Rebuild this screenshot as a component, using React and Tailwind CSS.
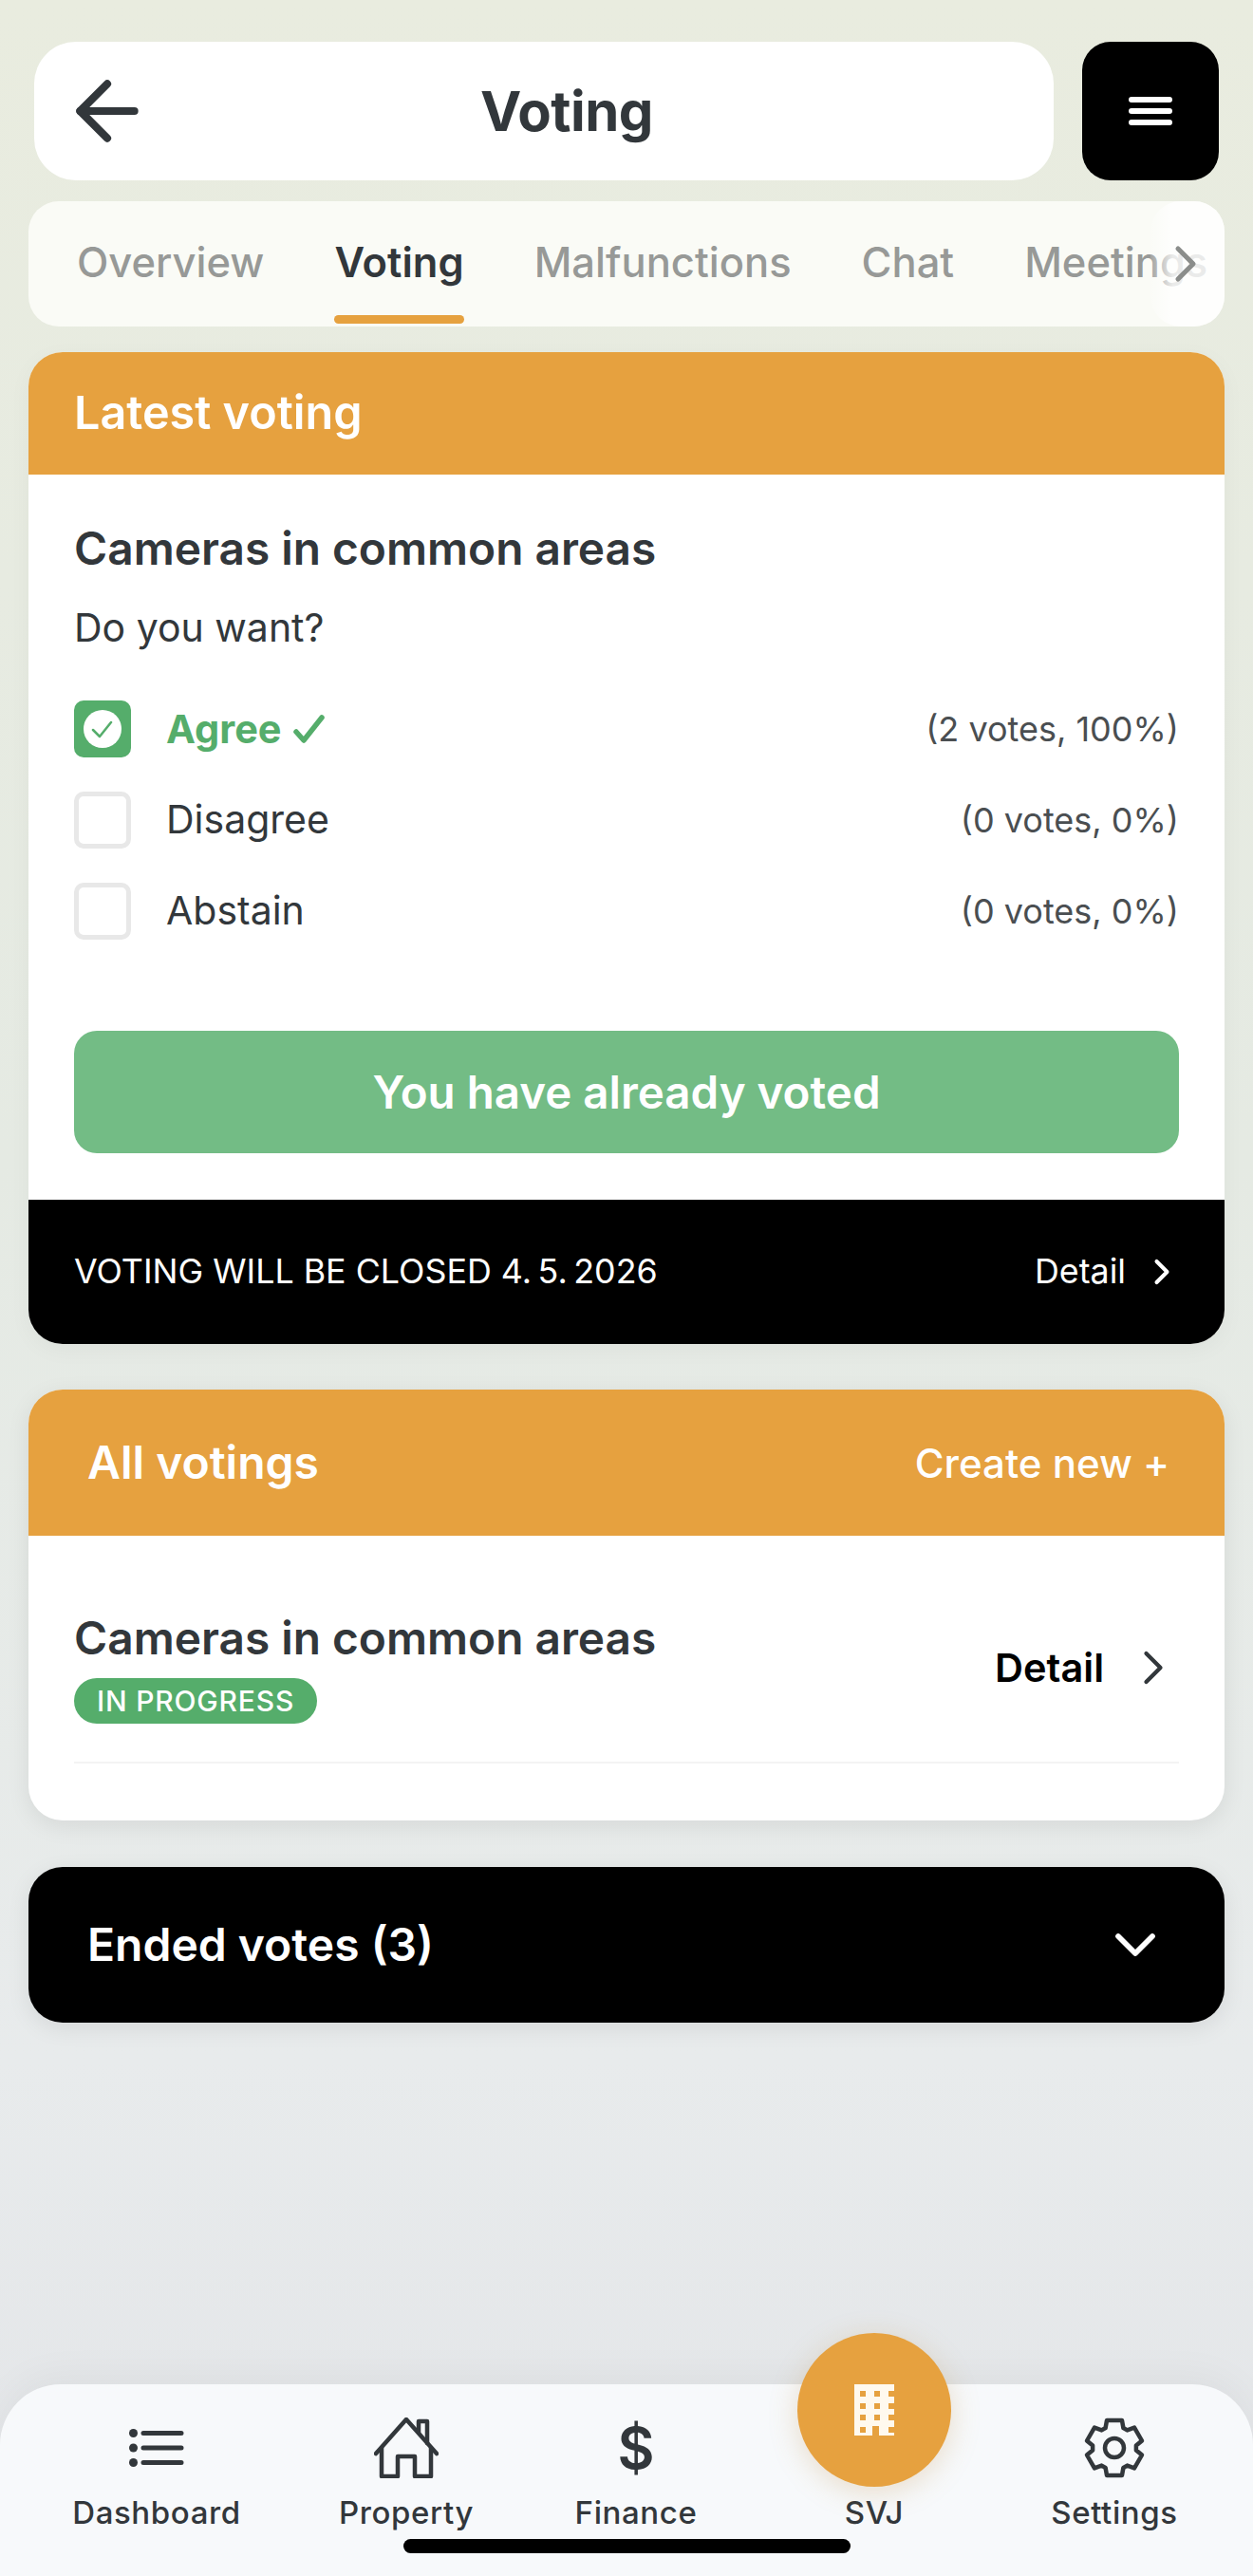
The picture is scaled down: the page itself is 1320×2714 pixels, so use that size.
import { ArrowLeft, ChevronDown, ChevronRight } from 'lucide-react';

const tabs = ['Overview', 'Voting', 'Malfunctions', 'Chat', 'Meetings'];

const options = [
  { label: 'Agree', result: '(2 votes, 100%)', checked: true },
  { label: 'Disagree', result: '(0 votes, 0%)' },
  { label: 'Abstain', result: '(0 votes, 0%)' },
];

// six rounded teeth round a centre point
function gearPath() {
  const pts = [];
  for (let i = 0; i < 6; i++) {
    const a = (i * Math.PI) / 3 - Math.PI / 2;
    [[-0.42, 23], [-0.27, 30], [0.27, 30], [0.42, 23]].forEach(([d, r]) => {
      pts.push(`${(32 + r * Math.cos(a + d)).toFixed(1)} ${(32 + r * Math.sin(a + d)).toFixed(1)}`);
    });
  }
  return 'M' + pts.join('L') + 'Z';
}

function ListIcon() {
  return (
    <svg width="58" height="40" viewBox="0 0 58 40" fill="none" stroke="#32373b" strokeWidth="5" strokeLinecap="round">
      <path d="M15 4.5H55M15 20H55M15 35.5H55" />
      <circle cx="4.500" cy="4.500" r="4.500" fill="#32373b" stroke="none" />
      <circle cx="4.500" cy="20" r="4.500" fill="#32373b" stroke="none" />
      <circle cx="4.500" cy="35.500" r="4.500" fill="#32373b" stroke="none" />
    </svg>
  );
}

function HouseIcon() {
  return (
    <svg width="68" height="64" viewBox="0 0 68 64" fill="none" stroke="#32373b" strokeWidth="4.500" strokeLinecap="round" strokeLinejoin="round">
      <path d="M2 38L34 2L66 38" />
      <path d="M8 32V62H25V41H43V62H60V32" />
      <path d="M47 16V4H56V27" />
    </svg>
  );
}

function GearIcon() {
  return (
    <svg width="64" height="66" viewBox="0 0 64 64" fill="none" stroke="#32373b" strokeWidth="4.500" strokeLinejoin="round">
      <path d={gearPath()} />
      <circle cx="32" cy="32" r="10" />
    </svg>
  );
}

function BuildingIcon() {
  const windows = [];
  [7, 22, 37].forEach((x) => {
    [7, 20, 32, 45].forEach((y) => {
      if (!(x === 22 && y === 45)) windows.push(<rect key={`${x}-${y}`} x={x - 1} y={y} width="6" height="6" fill="#e6a13f" />);
    });
  });
  return (
    <svg width="42" height="54" viewBox="0 0 42 54">
      <rect width="42" height="54" fill="#fff9ee" />
      {windows}
      <rect x="19" y="44" width="7" height="10" fill="#e6a13f" />
    </svg>
  );
}

function NavItem({ label, children }) {
  return (
    <div className="flex flex-col items-center">
      <div className="h-[70px] flex items-center justify-center">{children}</div>
      <span className="mt-[11px] text-[33px] leading-[44px] font-medium tracking-[0.6px] text-[#32373b]">{label}</span>
    </div>
  );
}

export default function App() {
  return (
    <div className="relative min-h-[2714px] flex flex-col bg-[linear-gradient(180deg,#e9ecdf_0%,#e5eae3_45%,#e8ebec_80%,#e3e5e8_100%)] font-['Inter',sans-serif] text-[#32373b] overflow-hidden">
      {/* top bar */}
      <div className="flex gap-[30px] pt-[44px] pl-[36px] pr-[36px]">
        <div className="relative flex-1 h-[146px] rounded-[44px] bg-white flex items-center justify-center pl-[48px]">
          <ArrowLeft className="absolute left-[28px] w-[98px] h-[98px]" strokeWidth={2} />
          <h1 className="text-[58px] font-bold tracking-[-0.5px]">Voting</h1>
        </div>
        <div className="w-[144px] h-[146px] rounded-[30px] bg-black flex flex-col items-center justify-center gap-[6px]">
          <span className="w-[46px] h-[6px] rounded-full bg-white" />
          <span className="w-[46px] h-[6px] rounded-full bg-white" />
          <span className="w-[46px] h-[6px] rounded-full bg-white" />
        </div>
      </div>

      {/* tabs */}
      <div className="relative mx-[30px] mt-[22px] h-[132px] rounded-[32px] bg-[#fafbf6] overflow-hidden">
        <div className="flex gap-[74px] pl-[51px] whitespace-nowrap">
          {tabs.map((tab) => (
            <div key={tab} className="relative h-[132px] flex items-center pb-[2px]">
              <span className={`text-[43.500px] font-medium ${tab === 'Voting' ? 'text-[#32373b] font-semibold' : 'text-[#979997]'}`}>{tab}</span>
              {tab === 'Voting' && <span className="absolute left-0 right-0 bottom-[3px] h-[9px] rounded-full bg-[#e6a13f]" />}
            </div>
          ))}
        </div>
        <div className="absolute right-0 top-0 bottom-0 w-[78px] rounded-l-[32px] bg-gradient-to-r from-white/10 via-white/80 via-30% to-white/80 flex items-center pl-[5px]">
          <ChevronRight className="w-[64px] h-[64px] text-[#8b8d8b]" strokeWidth={1.9} />
        </div>
      </div>

      {/* latest voting */}
      <section className="mx-[30px] mt-[27px] rounded-[36px] overflow-hidden bg-white shadow-[0_6px_24px_rgba(0,0,0,0.04)]">
        <div className="h-[129px] bg-[#e6a13f] flex items-center px-[48px]">
          <h2 className="text-[48.500px] font-semibold text-white">Latest voting</h2>
        </div>
        <div className="px-[48px] pt-[50px] pb-[49px]">
          <h3 className="text-[47.800px] leading-[56px] font-semibold">Cameras in common areas</h3>
          <p className="mt-[30px] text-[41px] leading-[50px]">Do you want?</p>
          <div className="mt-[52px] flex flex-col gap-[36px]">
            {options.map((o) => (
              <div key={o.label} className="flex items-center h-[60px]">
                {o.checked ? (
                  <div className="w-[60px] h-[60px] rounded-[10px] bg-[#55ad6b] flex items-center justify-center">
                    <svg width="40" height="40" viewBox="0 0 40 40">
                      <circle cx="20" cy="20" r="20" fill="white" />
                      <path d="M10 21L17 28L29 13" fill="none" stroke="#55ad6b" strokeWidth="2.500" strokeLinecap="round" strokeLinejoin="round" />
                    </svg>
                  </div>
                ) : (
                  <div className="w-[60px] h-[60px] rounded-[10px] border-[5px] border-[#e8e8e8]" />
                )}
                <span className={`ml-[37px] ${o.checked ? 'text-[41.500px] font-bold text-[#55ad6b]' : 'text-[41px]'}`}>{o.label}</span>
                {o.checked && (
                  <svg className="ml-[12px]" width="34" height="32" viewBox="0 0 34 32" fill="none" stroke="#55ad6b" strokeWidth="5.500" strokeLinecap="round" strokeLinejoin="round">
                    <path d="M3 19L11 28L30 4" />
                  </svg>
                )}
                <span className="ml-auto text-[36px] text-[#4a4e51]">{o.result}</span>
              </div>
            ))}
          </div>
          <div className="mt-[96px] h-[129px] rounded-[24px] bg-[#73bc85] flex items-center justify-center text-[47.500px] font-semibold text-white">You have already voted</div>
        </div>
        <div className="h-[152px] bg-black flex items-center justify-between pl-[48px] pr-[44px] text-white text-[35.800px]">
          <span>VOTING WILL BE CLOSED 4.{'\u2009'}5.{'\u2009'}2026</span>
          <span className="flex items-center gap-[16px]">Detail <ChevronRight className="w-[44px] h-[44px]" strokeWidth={2.2} /></span>
        </div>
      </section>

      {/* all votings */}
      <section className="mx-[30px] mt-[48px] rounded-[36px] overflow-hidden bg-white shadow-[0_6px_24px_rgba(0,0,0,0.08)]">
        <div className="h-[154px] bg-[#e6a13f] flex items-center justify-between pl-[62px] pr-[58px] text-white">
          <h2 className="text-[48px] font-semibold">All votings</h2>
          <span className="text-[42px] font-medium">Create new +</span>
        </div>
        <div className="px-[48px] pt-[80px] pb-[60px]">
          <div className="flex items-center justify-between pb-[40px] border-b-[2px] border-[#f3f3f3]">
            <div>
              <h3 className="text-[47.800px] leading-[56px] font-semibold">Cameras in common areas</h3>
              <span className="mt-[14px] inline-block h-[48px] leading-[48px] px-[24px] rounded-full bg-[#55ad6b] text-white text-[30px] font-medium tracking-[0.8px]">IN PROGRESS</span>
            </div>
            <div className="flex items-center gap-[22px] -mr-[3px] text-[41.500px] font-semibold text-black">
              Detail <ChevronRight className="w-[60px] h-[60px] text-[#32373b]" strokeWidth={1.7} />
            </div>
          </div>
        </div>
      </section>

      {/* ended votes */}
      <div className="mx-[30px] mt-[49px] h-[164px] rounded-[36px] bg-black flex items-center justify-between pl-[62px] pr-[58px] text-white shadow-[0_6px_24px_rgba(0,0,0,0.08)]">
        <span className="text-[48px] font-semibold">Ended votes (3)</span>
        <ChevronDown className="w-[72px] h-[72px]" strokeWidth={1.9} />
      </div>

      {/* bottom nav */}
      <nav className="relative mt-auto h-[202px] rounded-t-[64px] bg-[#f7f9fb] grid grid-cols-[330px_196px_288px_214px_292px] pt-[32px] shadow-[0_-10px_40px_rgba(0,0,0,0.04)]">
        <NavItem label="Dashboard"><ListIcon /></NavItem>
        <NavItem label="Property"><HouseIcon /></NavItem>
        <NavItem label="Finance"><span className="text-[60px] leading-none font-semibold">$</span></NavItem>
        <div className="relative flex flex-col items-center">
          <div className="absolute -top-[86px] w-[162px] h-[162px] rounded-full bg-[#e6a13f] flex items-center justify-center shadow-[0_6px_30px_rgba(190,140,60,0.25)]">
            <BuildingIcon />
          </div>
          <span className="mt-[81px] text-[33px] leading-[44px] font-medium tracking-[0.6px]">SVJ</span>
        </div>
        <NavItem label="Settings"><GearIcon /></NavItem>
        <div className="absolute left-[425px] top-[163px] w-[471px] h-[15px] rounded-full bg-black" />
      </nav>
    </div>
  );
}
